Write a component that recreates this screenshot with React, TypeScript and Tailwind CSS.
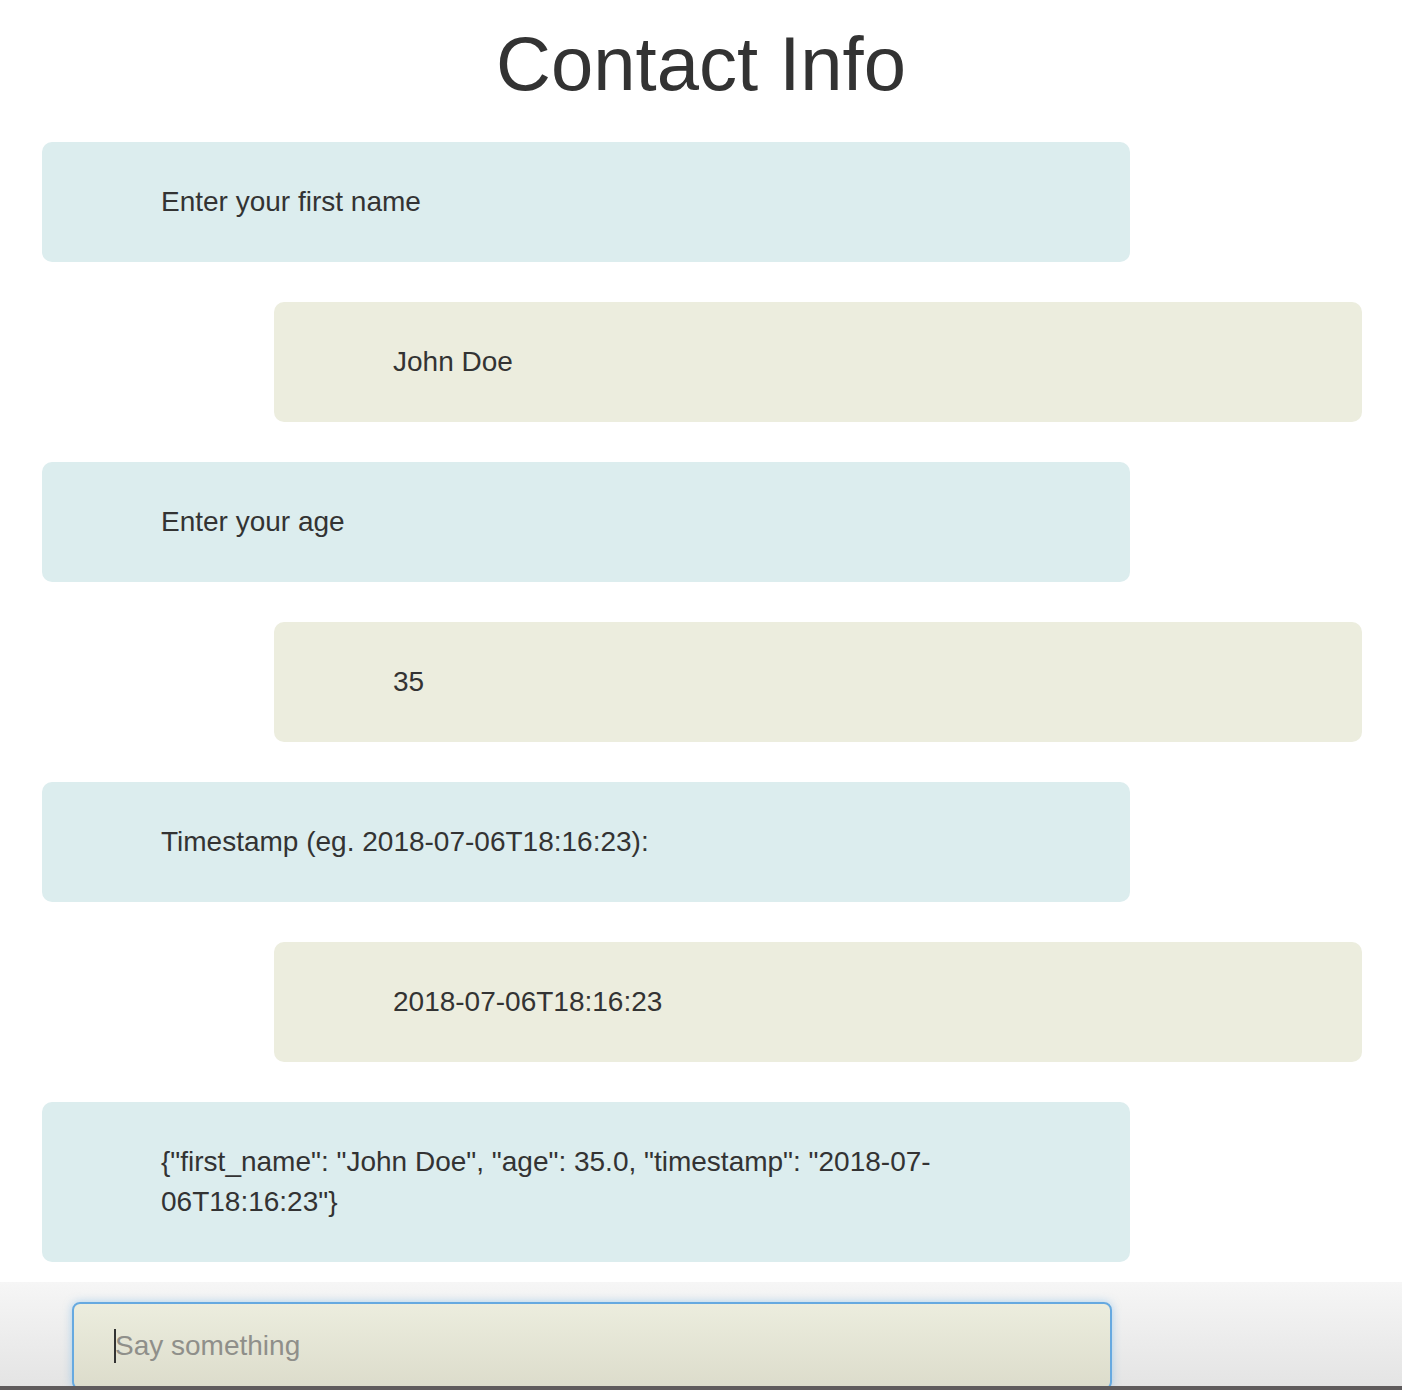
import { Fragment } from 'react';

type Message = { from: 'bot' | 'user'; text: React.ReactNode };

const messages: Message[] = [
  { from: 'bot', text: 'Enter your first name' },
  { from: 'user', text: 'John Doe' },
  { from: 'bot', text: 'Enter your age' },
  { from: 'user', text: '35' },
  { from: 'bot', text: 'Timestamp (eg. 2018-07-06T18:16:23):' },
  { from: 'user', text: '2018-07-06T18:16:23' },
  {
    from: 'bot',
    text: (
      <Fragment>
        {'{"first_name": "John Doe", "age": 35.0, "timestamp": "2018-07-'}
        <wbr />
        {'06T18:16:23"}'}
      </Fragment>
    ),
  },
];

function Bubble({ from, text }: Message) {
  const isBot = from === 'bot';
  return (
    <div className={isBot ? 'flex justify-start' : 'flex justify-end'}>
      <div
        className={
          isBot
            ? 'w-[1088px] rounded-[10px] bg-[#dcedee] pl-[119px] pr-[120px] py-[40px]'
            : 'w-[1088px] rounded-[10px] bg-[#ecedde] pl-[119px] pr-[120px] py-[40px]'
        }
      >
        <p className="text-[28px] leading-[40px] text-[#333333]">{text}</p>
      </div>
    </div>
  );
}

export default function App() {
  return (
    <main
      className="flex h-[1390px] w-[1402px] flex-col overflow-hidden bg-white"
      style={{ fontFamily: '"Liberation Sans", Arial, sans-serif' }}
    >
      {/* Title */}
      <h1 className="mt-[22px] mb-[36px] text-center text-[76px] leading-[84px] font-normal text-[#333333]">
        Contact Info
      </h1>

      {/* Conversation */}
      <div className="flex flex-col gap-[40px] pl-[42px] pr-[40px]">
        {messages.map((m, i) => (
          <Bubble key={i} {...m} />
        ))}
      </div>

      {/* Input bar */}
      <div className="mt-[20px] h-[104px] overflow-hidden bg-gradient-to-b from-[#f6f6f6] to-[#e4e4e4] pl-[72px] pt-[20px]">
        <div className="flex h-[88px] w-[1040px] items-center rounded-[8px] border-2 border-[#66a9e0] bg-gradient-to-b from-[#ecedde] to-[#dcdccb] px-[40px] shadow-[0_0_8px_rgba(102,175,233,0.5)]">
          <span className="h-[34px] w-[2px] bg-[#333333]" />
          <input
            className="-ml-[1px] flex-1 bg-transparent text-[28px] text-[#333333] outline-none placeholder:text-[#8f8f8a]"
            placeholder="Say something"
          />
        </div>
      </div>
      <div className="h-[4px] bg-[#5f5b5c]" />
    </main>
  );
}
